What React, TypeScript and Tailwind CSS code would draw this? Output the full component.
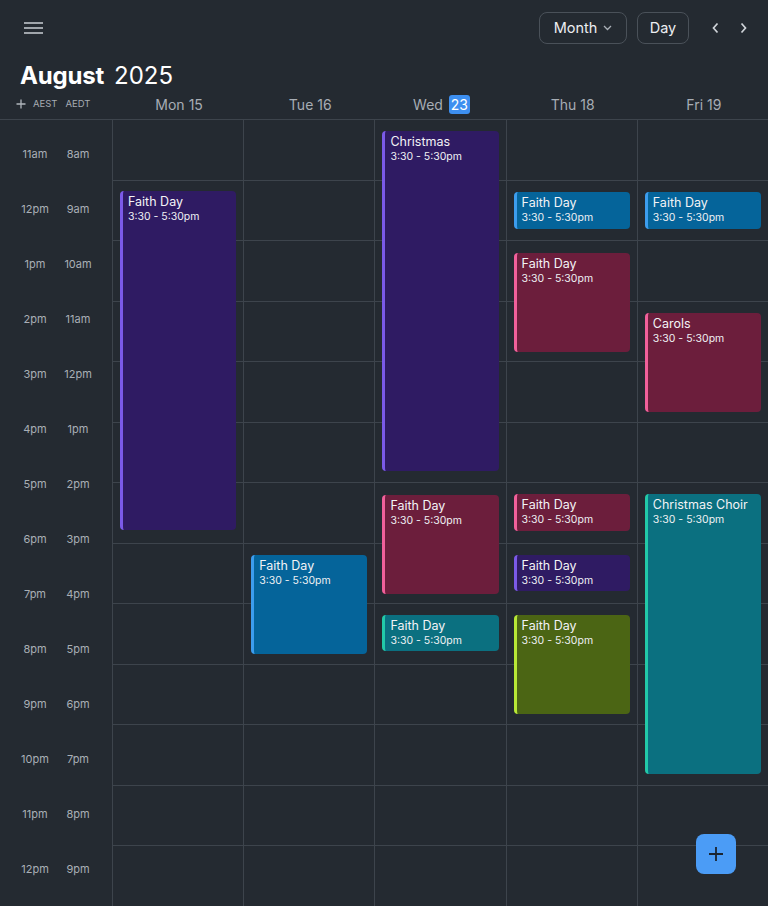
import React from "react";

type Ev = { title: string; top: number; h: number; kind: "purple" | "blue" | "rose" | "teal" | "olive" };

const styles: Record<Ev["kind"], string> = {
  purple: "bg-[#2f1b63] border-[#7b5ae8]",
  blue: "bg-[#05649a] border-[#3d9ded]",
  rose: "bg-[#6c1e3c] border-[#f0609a]",
  teal: "bg-[#0b7080] border-[#22c9a8]",
  olive: "bg-[#4b6514] border-[#b8e836]",
};

const days: { label: string; num: string; today?: boolean; events: Ev[] }[] = [
  { label: "Mon", num: "15", events: [{ title: "Faith Day", top: 71, h: 339, kind: "purple" }] },
  { label: "Tue", num: "16", events: [{ title: "Faith Day", top: 435, h: 99, kind: "blue" }] },
  {
    label: "Wed",
    num: "23",
    today: true,
    events: [
      { title: "Christmas", top: 11, h: 340, kind: "purple" },
      { title: "Faith Day", top: 375, h: 99, kind: "rose" },
      { title: "Faith Day", top: 495, h: 36, kind: "teal" },
    ],
  },
  {
    label: "Thu",
    num: "18",
    events: [
      { title: "Faith Day", top: 72, h: 37, kind: "blue" },
      { title: "Faith Day", top: 133, h: 99, kind: "rose" },
      { title: "Faith Day", top: 374, h: 37, kind: "rose" },
      { title: "Faith Day", top: 435, h: 36, kind: "purple" },
      { title: "Faith Day", top: 495, h: 99, kind: "olive" },
    ],
  },
  {
    label: "Fri",
    num: "19",
    events: [
      { title: "Faith Day", top: 72, h: 37, kind: "blue" },
      { title: "Carols", top: 193, h: 99, kind: "rose" },
      { title: "Christmas Choir", top: 374, h: 280, kind: "teal" },
    ],
  },
];

const times: [string, string][] = [
  ["11am", "8am"],
  ["12pm", "9am"],
  ["1pm", "10am"],
  ["2pm", "11am"],
  ["3pm", "12pm"],
  ["4pm", "1pm"],
  ["5pm", "2pm"],
  ["6pm", "3pm"],
  ["7pm", "4pm"],
  ["8pm", "5pm"],
  ["9pm", "6pm"],
  ["10pm", "7pm"],
  ["11pm", "8pm"],
  ["12pm", "9pm"],
];

const rows = Array.from({ length: 14 }, (_, i) => i);

export default function App() {
  return (
    <div
      className="relative h-[906px] w-[768px] overflow-hidden bg-[#242a31] text-[#e8eaed]"
      style={{ fontFamily: "Inter, 'Noto Sans', sans-serif" }}
    >
      {/* top bar */}
      <div className="flex h-14 items-center justify-between pl-6 pr-[20px]">
        <svg width="19" height="14" viewBox="0 0 19 14" className="text-[#c9ced4]">
          <path d="M0 2h19M0 7h19M0 12h19" stroke="currentColor" strokeWidth="1.6" />
        </svg>
        <div className="flex items-center">
          <button className="flex h-8 w-[88px] items-center justify-center gap-[6px] rounded-lg border border-[#4a5159] text-[14.5px] text-[#eceef1]">
            Month
            <svg width="9" height="6" viewBox="0 0 9 6">
              <path d="M1 1l3.5 3.5L8 1" fill="none" stroke="#aab0b7" strokeWidth="1.3" />
            </svg>
          </button>
          <button className="ml-[10px] flex h-8 w-[52px] items-center justify-center rounded-lg border border-[#4a5159] text-[14.5px] text-[#eceef1]">
            Day
          </button>
          <div className="ml-[22px] flex items-center gap-[19px]">
            <svg width="9" height="12" viewBox="0 0 9 12">
              <path d="M6.5 1.5L2.5 6l4 4.5" fill="none" stroke="#d0d4d9" strokeWidth="1.7" />
            </svg>
            <svg width="9" height="12" viewBox="0 0 9 12">
              <path d="M2.5 1.5L6.5 6l-4 4.5" fill="none" stroke="#d0d4d9" strokeWidth="1.7" />
            </svg>
          </div>
        </div>
      </div>

      {/* title */}
      <div className="mt-[2px] flex h-[36px] items-center pl-5 text-[24px] leading-none text-white">
        <span className="font-bold tracking-[-0.2px]">August</span>
        <span className="ml-[10px] font-normal">2025</span>
      </div>

      {/* column headers */}
      <div className="flex h-[25px] pb-[5px]">
        <div className="flex w-[112px] items-center pl-[16px] text-[9.5px] text-[#a6acb3]">
          <svg width="10" height="10" viewBox="0 0 10 10">
            <path d="M5 0.5v9M0.5 5h9" stroke="#b0b6bc" strokeWidth="1.3" />
          </svg>
          <span className="ml-[7px]">AEST</span>
          <span className="ml-[8px]">AEDT</span>
        </div>
        <div className="grid flex-1 grid-cols-5">
          {days.map((d) => (
            <div key={d.label} className="flex items-center justify-center pl-[3px] text-[14px] text-[#a7adb5]">
              <span>{d.label}</span>
              {d.today ? (
                <span className="ml-[6px] flex h-[19px] w-[21px] items-center justify-center rounded-[3px] bg-[#3d8ff0] text-white">
                  {d.num}
                </span>
              ) : (
                <span className="ml-[4px]">{d.num}</span>
              )}
            </div>
          ))}
        </div>
      </div>

      {/* grid */}
      <div className="flex border-t border-[#3d444c]">
        <div className="w-[112px] pt-[6.5px]">
          {times.map(([a, b], i) => (
            <div key={i} className="flex h-[55px] items-center pl-3 text-[11px] text-[#a9afb6]">
              <span className="w-[46px] text-center">{a}</span>
              <span className="w-[40px] text-center">{b}</span>
            </div>
          ))}
        </div>
        <div className="grid flex-1 grid-cols-5">
          {days.map((d) => (
            <div key={d.label} className="relative border-l border-[#3d444c]">
              {rows.map((r) => (
                <div key={r} className="h-[60.5px] border-b border-[#3d444c]" />
              ))}
              {d.events.map((e, i) => (
                <div
                  key={i}
                  className={`absolute left-[7px] right-[7px] overflow-hidden rounded-[4px] border-l-[3px] pl-[5px] pt-[3px] ${styles[e.kind]}`}
                  style={{ top: e.top, height: e.h }}
                >
                  <div className="text-[12.5px] leading-[16px] text-[#f3f3f6]">{e.title}</div>
                  <div className="text-[10.5px] leading-[14px] text-[#eef0f3]">3:30 - 5:30pm</div>
                </div>
              ))}
            </div>
          ))}
        </div>
      </div>

      {/* FAB */}
      <button className="absolute bottom-[32px] right-[32px] flex h-10 w-10 items-center justify-center rounded-lg bg-[#4b9cf6]">
        <svg width="16" height="16" viewBox="0 0 16 16">
          <path d="M8 1v14M1 8h14" stroke="#1b2530" strokeWidth="1.8" />
        </svg>
      </button>
    </div>
  );
}
